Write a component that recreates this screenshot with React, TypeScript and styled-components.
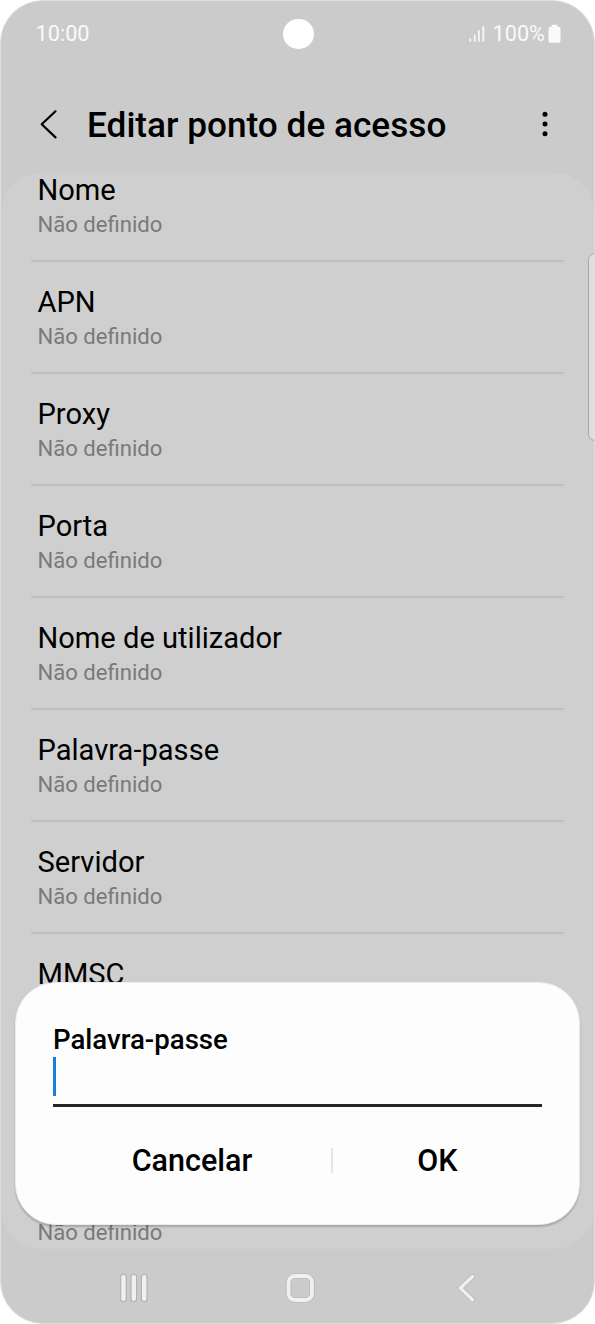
import React from 'react';
import styled, { createGlobalStyle } from 'styled-components';

const GlobalStyle = createGlobalStyle`
  * { box-sizing: border-box; }
  body { margin: 0; background: #fff; font-family: Roboto, sans-serif; }
`;

const Phone = styled.main`
  position: relative;
  display: flex;
  flex-direction: column;
  width: 595px;
  height: 1324px;
  overflow: hidden;
  border: 1px solid #dedede;
  border-radius: 43px;
  background: #cbcbcb;
  color: #000;
`;

const StatusBar = styled.div`
  display: flex;
  align-items: center;
  justify-content: space-between;
  height: 66px;
  padding: 0 33px 0 34.5px;
  color: #fafafa;
  font-size: 21.7px;
  line-height: 26px;
`;

const StatusIcons = styled.div`
  display: flex;
  align-items: center;
  svg { display: block; }
  span { margin: 0 3px 0 7.5px; }
`;

const Camera = styled.div`
  position: absolute;
  top: 17.6px;
  left: 282.4px;
  width: 30.6px;
  height: 30.6px;
  border-radius: 50%;
  background: #fff;
`;

const Header = styled.header`
  display: flex;
  align-items: center;
  height: 106px;
  padding: 7px 46.5px 0 38px;
  svg { display: block; flex: none; }
`;

const Heading = styled.h1`
  flex: 1;
  margin: 3px 0 0 28px;
  font-size: 35.2px;
  line-height: 42px;
  font-weight: 500;
`;

const List = styled.section`
  height: 1076px;
  flex: none;
  overflow: hidden;
  padding: 0 30px;
  border-radius: 40px;
  background: #cfcfcf;
`;

const Row = styled.div<{ $first?: boolean }>`
  display: flex;
  flex-direction: column;
  justify-content: flex-end;
  height: ${(p) => (p.$first ? 89 : 112)}px;
  padding: 0 6.5px 20px;
  border-bottom: 2px solid #c0c0c0;
`;

const RowTitle = styled.div`
  height: 36px;
  font-size: 29.1px;
  line-height: 36px;
`;

const RowValue = styled.div`
  height: 32px;
  color: #7a7a7a;
  font-size: 22.1px;
  line-height: 32px;
`;

const EdgeHandle = styled.div`
  position: absolute;
  top: 252px;
  right: -10px;
  width: 16px;
  height: 188px;
  border: 1.5px solid #a9a9a9;
  border-radius: 7px;
  background: #dedede;
`;

const Dialog = styled.div`
  position: absolute;
  top: 981px;
  left: 14px;
  width: 565px;
  height: 243px;
  padding: 40px 37px 0;
  border: 1px solid #ececec;
  border-radius: 41px;
  background: #fdfdfd;
  box-shadow: 0 2px 2px rgba(0, 0, 0, 0.2);
`;

const DialogTitle = styled.h2`
  margin: 0;
  height: 34px;
  font-size: 27.6px;
  line-height: 33px;
  font-weight: 500;
`;

const Field = styled.div`
  display: flex;
  width: 489px;
  height: 50px;
  border-bottom: 3px solid #252525;
`;

const Caret = styled.div`
  width: 3px;
  height: 39px;
  background: #1a7fd9;
`;

const Actions = styled.div`
  display: flex;
  align-items: center;
  width: 489px;
  height: 106px;
`;

const Action = styled.button<{ $width: number }>`
  width: ${(p) => p.$width}px;
  padding: 2px 0 0;
  border: 0;
  background: none;
  color: #000;
  font: 500 30.5px/36px Roboto, sans-serif;
  text-align: center;
`;

const Separator = styled.div`
  width: 2px;
  height: 25px;
  background: #e6e6e6;
`;

const NavBar = styled.nav`
  display: flex;
  align-items: center;
  flex: 1;
  padding: 3px 0 0 117px;
  svg { display: block; }
`;

const HomeIcon = styled.svg`
  margin: 0 141px 0 134px;
`;

const rows: { title?: string; value?: string }[] = [
  { title: 'Nome', value: 'Não definido' },
  { title: 'APN', value: 'Não definido' },
  { title: 'Proxy', value: 'Não definido' },
  { title: 'Porta', value: 'Não definido' },
  { title: 'Nome de utilizador', value: 'Não definido' },
  { title: 'Palavra-passe', value: 'Não definido' },
  { title: 'Servidor', value: 'Não definido' },
  { title: 'MMSC' },
  {},
  { value: 'Não definido' },
];

export default function App() {
  return (
    <>
      <GlobalStyle />
      <Phone>
        <StatusBar>
          <span>10:00</span>
          <StatusIcons>
            <svg width="16" height="18" viewBox="0 0 16 18" fill="none" stroke="#f6f6f6" strokeWidth="1.9" strokeLinecap="round">
              <path d="M1.3 14.2v1.7M5.7 10.5v5.4M9.9 6v9.900M14.3 2v13.900" />
            </svg>
            <span>100%</span>
            <svg width="13" height="20" viewBox="0 0 13 20" fill="#fafafa">
              <path d="M3.600 1.500Q3.600.7 4.500.7h4q.9 0 .9.8v1.200h1.100q2 0 2 2v12q0 2-2 2h-8q-2 0-2-2v-12q0-2 2-2h1.100z" />
            </svg>
          </StatusIcons>
        </StatusBar>
        <Camera />
        <Header>
          <svg width="20" height="32" viewBox="0 0 20 32" fill="none" stroke="#000" strokeWidth="2.200" strokeLinecap="round" strokeLinejoin="round">
            <path d="M16.500 3.300 2.700 16.200 16.500 29.400" />
          </svg>
          <Heading>Editar ponto de acesso</Heading>
          <svg width="6" height="28" viewBox="0 0 6 28" fill="#000">
            <circle cx="3" cy="4.300" r="2.500" />
            <circle cx="3" cy="14" r="2.500" />
            <circle cx="3" cy="23.700" r="2.500" />
          </svg>
        </Header>
        <List>
          {rows.map((row, i) => (
            <Row key={i} $first={i === 0}>
              <RowTitle>{row.title}</RowTitle>
              <RowValue>{row.value}</RowValue>
            </Row>
          ))}
        </List>
        <NavBar>
          <svg width="32" height="32" viewBox="0 0 32 32" fill="#f0f0f0" stroke="#b3b3b3" strokeWidth="1.200">
            <rect x="2.700" y="2.500" width="5.600" height="27" rx="2.400" />
            <rect x="13" y="2.500" width="5.600" height="27" rx="2.400" />
            <rect x="23.400" y="2.500" width="5.600" height="27" rx="2.400" />
          </svg>
          <HomeIcon width="32" height="32" viewBox="0 0 32 32" fill="none">
            <rect x="4.500" y="4" width="23.500" height="24" rx="6.500" stroke="#bababa" strokeWidth="5.600" />
            <rect x="4.500" y="4" width="23.500" height="24" rx="6.500" stroke="#f0f0f0" strokeWidth="3.800" />
          </HomeIcon>
          <svg width="22" height="32" viewBox="0 0 22 32" fill="none" strokeLinecap="round">
            <path d="M15.500 4.500 3.500 16.100 15.500 27.700" stroke="#bababa" strokeWidth="5.200" />
            <path d="M15.500 4.500 3.500 16.100 15.500 27.700" stroke="#f0f0f0" strokeWidth="3.400" />
          </svg>
        </NavBar>
        <EdgeHandle />
        <Dialog>
          <DialogTitle>Palavra-passe</DialogTitle>
          <Field>
            <Caret />
          </Field>
          <Actions>
            <Action $width={278}>Cancelar</Action>
            <Separator />
            <Action $width={209}>OK</Action>
          </Actions>
        </Dialog>
      </Phone>
    </>
  );
}
